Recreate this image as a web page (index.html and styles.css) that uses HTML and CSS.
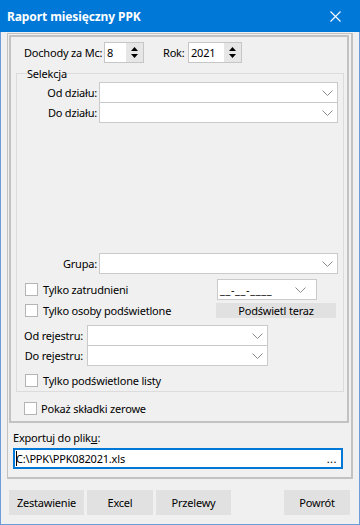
FILE: index.html
```html
<!DOCTYPE html>
<html lang="pl">
<head>
    <meta charset="UTF-8">
    <meta name="viewport" content="width=device-width, initial-scale=1.0">
    <link rel="stylesheet" href="styles.css">
</head>
<body>
    <div class="window">
        <div class="titlebar">
            <span class="title">Raport miesięczny PPK</span>
            <svg class="close-icon" width="11" height="11" viewBox="0 0 11 11">
                <path d="M0.5 0.5L10.5 10.5M10.5 0.5L0.5 10.5" stroke="#fff" stroke-width="1.1" fill="none"/>
            </svg>
        </div>
        <div class="client">
            <div class="frame">
                <div class="panel">
                    <div class="period">
                        <span class="lbl-mc">Dochody za Mc:</span>
                        <div class="spin spin-mc">
                            <span class="spin-val">8</span>
                            <span class="spin-btn">
                                <svg width="7" height="13" viewBox="0 0 7 13"><path d="M0 5L3.5 1L7 5Z M0 8L7 8L3.5 12Z" fill="#000"/></svg>
                            </span>
                        </div>
                        <span class="lbl-rok">Rok:</span>
                        <div class="spin spin-rok">
                            <span class="spin-val">2021</span>
                            <span class="spin-btn">
                                <svg width="7" height="13" viewBox="0 0 7 13"><path d="M0 5L3.5 1L7 5Z M0 8L7 8L3.5 12Z" fill="#000"/></svg>
                            </span>
                        </div>
                    </div>

                    <fieldset class="group">
                        <legend>Selekcja</legend>
                        <div class="field">
                            <label>Od działu:</label>
                            <div class="combo combo-wide"><svg class="chev" width="11" height="6" viewBox="0 0 11 6"><path d="M0.5 0.5L5.5 5.5L10.5 0.5" stroke="#8a8a8a" fill="none"/></svg></div>
                        </div>
                        <div class="field field-next">
                            <label>Do działu:</label>
                            <div class="combo combo-wide"><svg class="chev" width="11" height="6" viewBox="0 0 11 6"><path d="M0.5 0.5L5.5 5.5L10.5 0.5" stroke="#8a8a8a" fill="none"/></svg></div>
                        </div>
                        <div class="field field-grupa">
                            <label>Grupa:</label>
                            <div class="combo combo-wide"><svg class="chev" width="11" height="6" viewBox="0 0 11 6"><path d="M0.5 0.5L5.5 5.5L10.5 0.5" stroke="#8a8a8a" fill="none"/></svg></div>
                        </div>

                        <div class="opts">
                            <div class="check"><span class="box"></span>Tylko zatrudnieni</div>
                            <div class="combo combo-date"><span class="date-mask">__-__-____</span><svg class="chev" width="11" height="6" viewBox="0 0 11 6"><path d="M0.5 0.5L5.5 5.5L10.5 0.5" stroke="#8a8a8a" fill="none"/></svg></div>
                            <div class="check"><span class="box"></span>Tylko osoby podświetlone</div>
                            <div class="btn btn-highlight">Podświetl teraz</div>
                        </div>

                        <div class="field field-rej">
                            <label>Od rejestru:</label>
                            <div class="combo combo-short"><svg class="chev" width="11" height="6" viewBox="0 0 11 6"><path d="M0.5 0.5L5.5 5.5L10.5 0.5" stroke="#8a8a8a" fill="none"/></svg></div>
                        </div>
                        <div class="field field-next">
                            <label class="lbl-rej">Do rejestru:</label>
                            <div class="combo combo-short"><svg class="chev" width="11" height="6" viewBox="0 0 11 6"><path d="M0.5 0.5L5.5 5.5L10.5 0.5" stroke="#8a8a8a" fill="none"/></svg></div>
                        </div>

                        <div class="check check-lists"><span class="box"></span>Tylko podświetlone listy</div>
                    </fieldset>

                    <div class="check check-zero"><span class="box"></span>Pokaż składki zerowe</div>
                </div>

                <div class="export-lbl">Exportuj do plik<u>u</u>:</div>
                <div class="file-box">
                    <span class="file-path"><span class="caret"></span>C:\PPK\PPK082021.xls</span>
                    <span class="dots">...</span>
                </div>
            </div>

            <div class="buttons">
                <div class="btn btn-zest">Zestawienie</div>
                <div class="btn btn-excel">Excel</div>
                <div class="btn btn-przel">Przelewy</div>
                <div class="btn btn-powrot">Powrót</div>
            </div>
        </div>
    </div>
</body>
</html>
```

FILE: styles.css
```css
* {
    box-sizing: border-box;
}
body {
    margin: 0;
    background: #f0f0f0;
    font-family: 'Noto Sans', sans-serif;
    font-size: 11px;
    letter-spacing: -0.2px;
    color: #000;
}
.window {
    width: 360px;
    height: 525px;
    border: 1px solid #6c9dd8;
    border-top: 0;
    background: #f0f0f0;
}
.titlebar {
    height: 32px;
    margin: 0 -1px;
    padding: 0 19px 0 7px;
    background: #0078d7;
    color: #fff;
    display: flex;
    align-items: center;
    justify-content: space-between;
}
.title {
    font-weight: bold;
    font-size: 12px;
    letter-spacing: -0.1px;
}

/* ramka zewnetrzna i panel z opcjami */
.frame {
    margin: 1px 6px 0;
    border-style: solid;
    border-color: #c2c2c2;
    border-width: 1px 2px 2px 1px;
    padding: 1px 2px 8px 1px;
}
.panel {
    border: 2px solid #c2c2c2;
    padding: 5px 0 2px;
}
.period {
    display: flex;
    align-items: center;
    height: 21px;
    padding-left: 13px;
}
.lbl-mc {
    width: 80px;
}
.lbl-rok {
    width: 25px;
    margin-left: 19px;
}
.spin {
    height: 21px;
    border: 1px solid #c6c6c6;
    background: #fff;
    display: flex;
    justify-content: space-between;
}
.spin-mc {
    width: 40px;
}
.spin-rok {
    width: 54px;
}
.spin-val {
    padding-left: 2px;
    line-height: 19px;
}
.spin-btn {
    width: 17px;
    background: #e6e6e6;
    display: flex;
    align-items: center;
    justify-content: center;
}

/* grupa Selekcja */
.group {
    margin: 3px 0 0 5px;
    width: 328px;
    min-width: 0;
    border: 1px solid #dcdcdc;
    padding: 1px 0 0;
}
.group legend {
    margin-left: 10px;
    padding: 0;
    line-height: 15px;
}
.field {
    display: flex;
    align-items: center;
}
.field label {
    width: 82px;
    padding-right: 2px;
    text-align: right;
}
.field-next {
    margin-top: -1px;
}
.field-grupa {
    margin-top: 130px;
}
.field-rej {
    margin-top: 5px;
}
.field-rej label,
.field label.lbl-rej {
    width: 70px;
    padding-right: 4px;
}
.combo {
    height: 21px;
    border: 1px solid #cacaca;
    background: #fff;
    display: flex;
    align-items: center;
    justify-content: flex-end;
    padding-right: 4px;
}
.combo-wide {
    width: 239px;
}
.combo-short {
    width: 181px;
}
.combo-date {
    width: 100px;
    margin-left: 1px;
    justify-content: space-between;
    padding-left: 2px;
    padding-right: 10px;
}
.date-mask {
    letter-spacing: 0.6px;
}

.opts {
    display: grid;
    grid-template-columns: 191px 120px;
    grid-template-rows: 21px 19px;
    row-gap: 1px;
    align-items: center;
    padding-left: 8px;
    margin-top: 5px;
}
.check {
    display: flex;
    align-items: center;
}
.box {
    width: 13px;
    height: 13px;
    margin-right: 5px;
    border: 1px solid #b4b4b4;
    background: #fff;
}
.check-lists {
    height: 21px;
    margin-top: 4px;
    padding-left: 8px;
}
.check-zero {
    height: 21px;
    margin-top: 6px;
    padding-left: 13px;
}
.check-zero .box {
    margin-right: 4px;
}

/* eksport */
.export-lbl {
    margin: 7px 0 0 4px;
    line-height: 15px;
}
.file-box {
    width: 330px;
    height: 21px;
    margin: 3px 0 0 4px;
    border: 2px solid #0078d7;
    background: #fff;
    display: flex;
    align-items: center;
    justify-content: space-between;
    padding: 0 4px 0 1px;
}
.file-path {
    position: relative;
}
.caret {
    position: absolute;
    left: 0;
    top: 0;
    width: 1px;
    height: 100%;
    background: #000;
}
.dots {
    letter-spacing: 0.5px;
}

/* przyciski */
.btn {
    background: #e1e1e1;
    display: flex;
    align-items: center;
    justify-content: center;
}
.buttons {
    display: flex;
    padding: 11px 0 0 8px;
}
.buttons .btn {
    height: 25px;
}
.btn-zest {
    width: 75px;
}
.btn-excel {
    width: 66px;
    margin-left: 3px;
}
.btn-przel {
    width: 75px;
    margin-left: 3px;
}
.btn-powrot {
    width: 66px;
    margin-left: 53px;
}
```
